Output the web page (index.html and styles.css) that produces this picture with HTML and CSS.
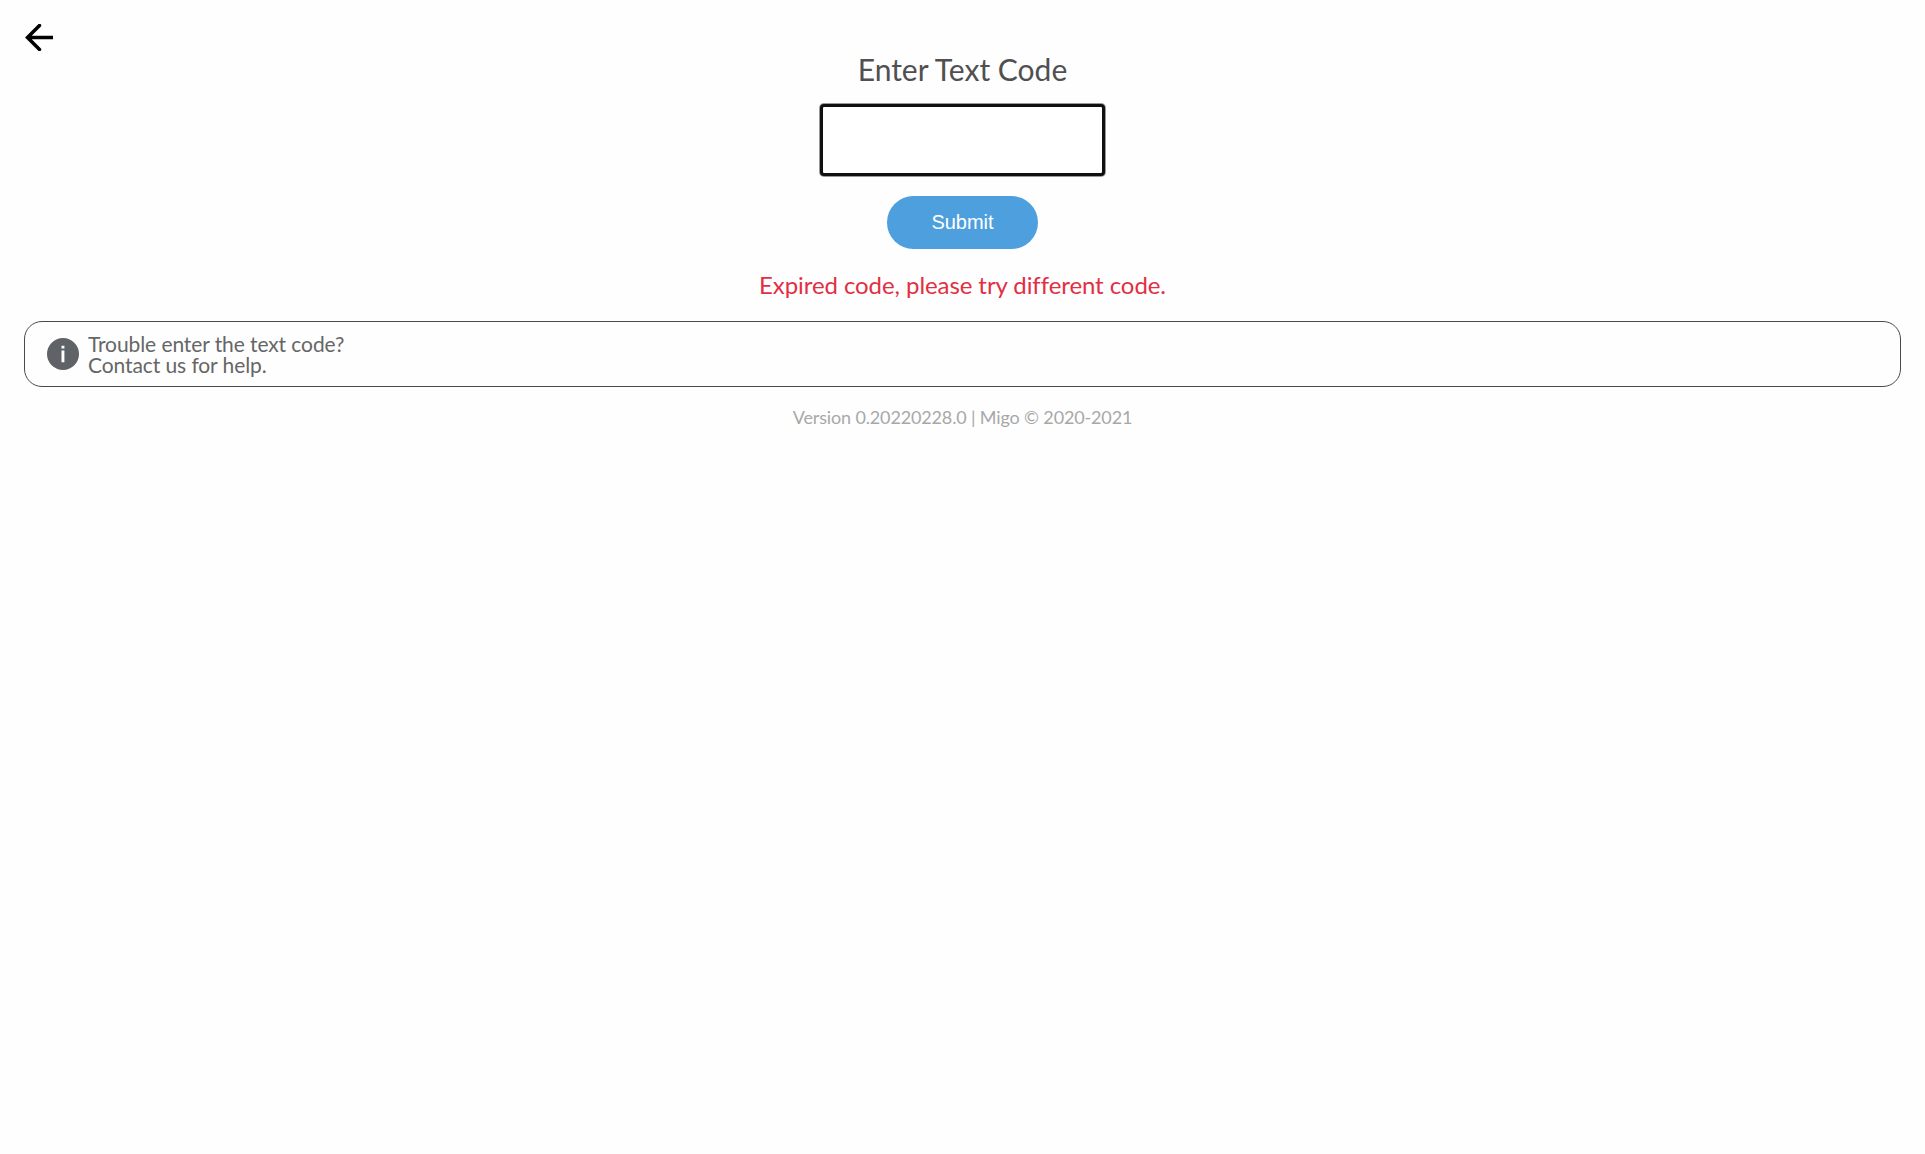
FILE: index.html
```html
<!DOCTYPE html>
<html lang="en">
<head>
<meta charset="utf-8">
<title>Enter Text Code</title>
<link rel="stylesheet" href="styles.css">
</head>
<body>
<header class="topbar">
  <a class="back" href="#" aria-label="Back">
    <svg width="28" height="27" viewBox="0 0 28 27"><path d="M27.500 13.500H3M14.500 1.500L2.500 13.500L14.500 25.500"/></svg>
  </a>
</header>
<main class="content">
  <h1 class="title"><span>Enter Text Code</span></h1>
  <input class="code" type="text" aria-label="Text code">
  <button class="submit" type="button"><span>Submit</span></button>
  <p class="error"><span>Expired code, please try different code.</span></p>
  <section class="help">
    <svg class="info" width="32" height="32" viewBox="0 0 32 32"><circle cx="16" cy="16" r="16"/><path d="M14.500 7.800h2.900v2.600h-2.900zM14.500 12.400h2.900v11.800h-2.900z"/></svg>
    <div class="help-text"><div>Trouble enter the text code?</div><div>Contact us for help.</div></div>
  </section>
</main>
<footer class="version"><span>Version 0.20220228.0 | Migo © 2020-2021</span></footer>
</body>
</html>
```
FILE: styles.css
```css
* { box-sizing: border-box; }
body { margin: 0; padding: 24px 24px 0; background: #fefefe; color: #505050; font-family: Lato, sans-serif; }
.topbar { height: 27px; }
.back { display: block; width: 28px; margin-left: 1px; }
.back svg { display: block; fill: none; stroke: #000; stroke-width: 3.500; stroke-linecap: round; }
.content { display: flex; flex-direction: column; align-items: center; }
.title { margin: 0; font-size: 30px; font-weight: 400; line-height: 36px; }
.code { width: 285px; height: 72px; margin: 17px 0 20px; border: 3px solid #101010; border-radius: 4px; box-shadow: 0 0 0 1px #999; background: #fff; outline: none; font-size: 30px; text-align: center; }
.submit { width: 151px; height: 53px; border: 0; border-radius: 27px; background: #4e9fdd; color: #fff; font: 20px "Liberation Sans", Arial, sans-serif; }
.error { margin: 21px 0; color: #e22f43; font-size: 24px; line-height: 30px; letter-spacing: -0.08px; }
.help { display: flex; align-items: center; gap: 9px; width: 100%; height: 66px; padding-left: 22px; border: 1px solid #4a4a4a; border-radius: 18px; }
.info { flex: none; fill: #5f6368; }
.info path { fill: #fff; }
.help-text { color: #666; font-size: 21px; line-height: 21px; letter-spacing: -0.09px; }
.version { margin-top: 18px; text-align: center; color: #a8a8a8; font-size: 18px; line-height: 24px; letter-spacing: -0.145px; }
```
